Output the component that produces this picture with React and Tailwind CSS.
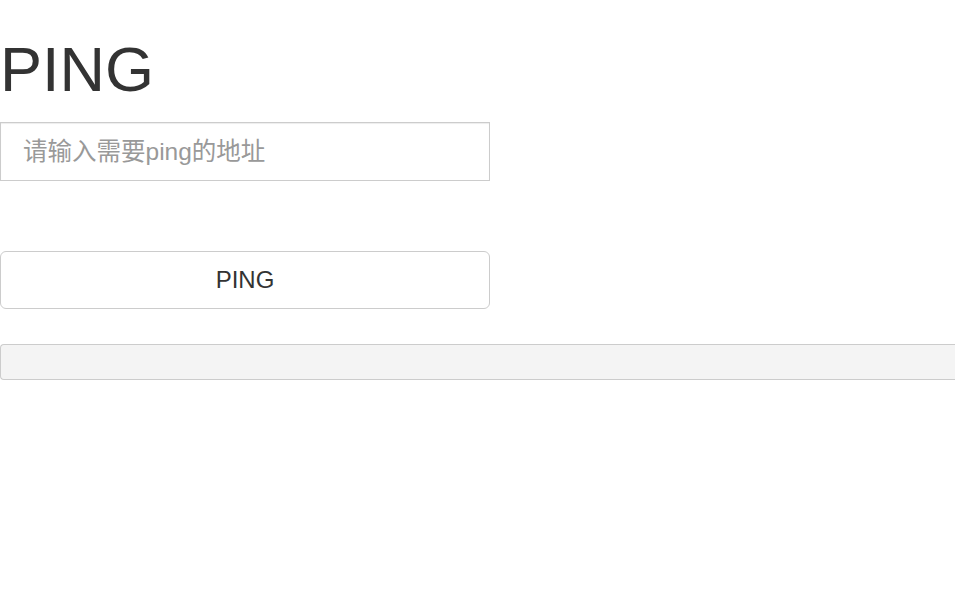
import React from 'react'

export default function App() {
  return (
    <div className="min-h-screen overflow-hidden bg-white font-['Liberation_Sans','Noto_Sans_CJK_SC',sans-serif] text-[#333]">
      <h1 className="pt-[38px] text-[63px] leading-[62px] font-normal">PING</h1>

      <input
        type="text"
        placeholder="请输入需要ping的地址"
        className="mt-[22px] block h-[59px] w-[490px] border border-[#ccc] bg-white px-[22px] text-[24.5px] text-[#555] shadow-[inset_0_1px_1px_rgba(0,0,0,0.075)] outline-none placeholder:text-[#999]"
      />

      <button
        type="button"
        className="mt-[70px] block h-[58px] w-[490px] rounded-[6px] border border-[#ccc] bg-white text-[24px] text-[#333]"
      >
        PING
      </button>

      <div className="mt-[35px] h-[36px] w-full rounded-l-[4px] border border-r-0 border-[#ccc] bg-[#f4f4f4]" />
    </div>
  )
}
